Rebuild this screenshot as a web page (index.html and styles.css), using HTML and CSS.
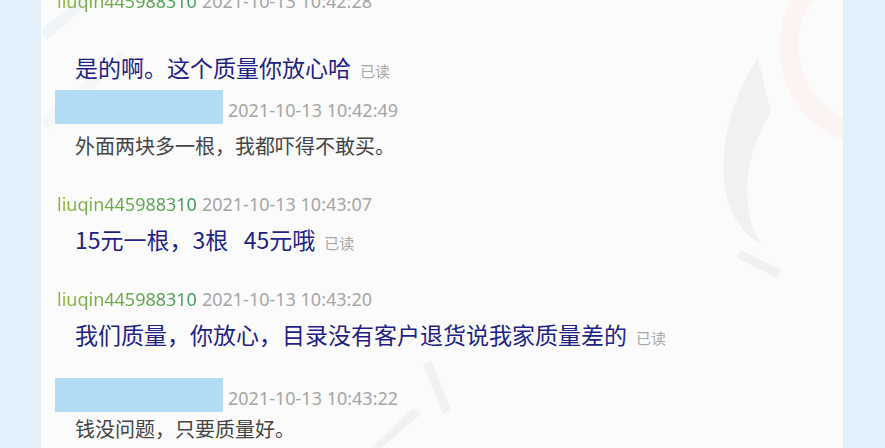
FILE: index.html
```html
<!DOCTYPE html>
<html lang="zh-CN">
<head>
    <meta charset="UTF-8">
    <title>聊天记录</title>
    <link rel="stylesheet" href="styles.css">
</head>
<body>
    <div class="page">
        <div class="side"></div>

        <div class="panel">
            <!-- 背景水印 -->
            <svg class="mark" width="802" height="448" viewBox="0 0 802 448">
                <path d="M750 0 A100 100 0 0 0 802 140 L802 118 A80 80 0 0 1 772 0 Z" fill="#fbeee9" opacity="0.5"/>
                <path d="M717 58 C688 100 672 165 690 210 C700 232 712 240 720 243 C700 215 700 160 730 112 Z" fill="#efefef" opacity="0.8"/>
                <path d="M0 30 L60 -20 L66 -12 L6 40 Z" fill="#e4eaf2" opacity="0.4"/>
                <path d="M0 120 L80 50 L86 58 L6 130 Z" fill="#e8ecf2" opacity="0.3"/>
                <path d="M700 250 L740 270 L736 278 L696 258 Z" fill="#f1f1f1"/>
                <path d="M390 360 L410 410 L402 414 L382 364 Z" fill="#f1f1f1"/>
                <path d="M330 448 L372 408 L380 414 L340 448 Z" fill="#f1f1f1"/>
            </svg>

            <div class="chat">
                <div class="group first">
                    <div class="head"><span class="name">liuqin445988310</span><span class="time">2021-10-13 10:42:28</span></div>
                    <div class="msg sent loose">是的啊。这个质量你放心哈<span class="read">已读</span></div>
                </div>

                <div class="group near">
                    <div class="head other"><span class="mask"></span><span class="time">2021-10-13 10:42:49</span></div>
                    <div class="msg recv">外面两块多一根，我都吓得不敢买。</div>
                </div>

                <div class="group">
                    <div class="head"><span class="name">liuqin445988310</span><span class="time">2021-10-13 10:43:07</span></div>
                    <div class="msg sent">15元一根，3根&nbsp;&nbsp;&nbsp;45元哦<span class="read">已读</span></div>
                </div>

                <div class="group">
                    <div class="head"><span class="name">liuqin445988310</span><span class="time">2021-10-13 10:43:20</span></div>
                    <div class="msg sent">我们质量，你放心，目录没有客户退货说我家质量差的<span class="read">已读</span></div>
                </div>

                <div class="group after">
                    <div class="head other"><span class="mask"></span><span class="time">2021-10-13 10:43:22</span></div>
                    <div class="msg recv close">钱没问题，只要质量好。</div>
                </div>
            </div>
        </div>

        <div class="side"></div>
    </div>
</body>
</html>
```

FILE: styles.css
```css
body {
    margin: 0;
    background-color: #e2f0fc;
    font-family: "Noto Sans", "Noto Sans CJK SC", sans-serif;
    overflow: hidden;
}
.page {
    display: flex;
    height: 448px;
}
.side {
    width: 41px;
    flex-shrink: 0;
    background-color: #e2f0fc;
}
.side:last-child {
    width: 42px;
}
.panel {
    flex: 1;
    position: relative;
    background-color: #fbfbfb;
    overflow: hidden;
}
/* Watermark sits over the background only */
.mark {
    position: absolute;
    top: 0;
    left: 0;
    pointer-events: none;
}
.chat {
    position: relative;
    padding-left: 16px;
}
.group {
    margin-top: 32px;
}
.group.first {
    margin-top: -11px;
}
.group.near {
    margin-top: 7px;
}
.group.after {
    margin-top: 28px;
}
.head {
    display: flex;
    align-items: center;
    height: 24px;
    font-size: 18px;
    line-height: 24px;
    white-space: nowrap;
}
.head.other {
    height: 34px;
    align-items: flex-end;
}
.name {
    background: linear-gradient(90deg, #8db53a, #3f9a5c);
    -webkit-background-clip: text;
    background-clip: text;
    color: transparent;
    margin-right: 5px;
}
.time {
    color: #a6a6a6;
}
.head.other .time {
    margin-bottom: 2px;
}
.mask {
    width: 168px;
    height: 34px;
    background-color: #b2dcf4;
    margin-left: -2px;
    margin-right: 5px;
}
.msg {
    padding-left: 18px;
    font-family: "Noto Sans CJK SC", "Noto Sans", sans-serif;
    white-space: nowrap;
}
.msg.sent {
    margin-top: 7px;
    font-size: 23px;
    line-height: 32px;
    height: 32px;
    color: #1f1f86;
}
.msg.sent.loose {
    margin-top: 38px;
}
.msg.recv {
    margin-top: 8px;
    font-size: 20px;
    line-height: 28px;
    height: 28px;
    color: #454545;
}
.msg.recv.close {
    margin-top: 3px;
}
.read {
    font-size: 15px;
    line-height: 1;
    color: #a8a8a8;
    margin-left: 9px;
}
```
